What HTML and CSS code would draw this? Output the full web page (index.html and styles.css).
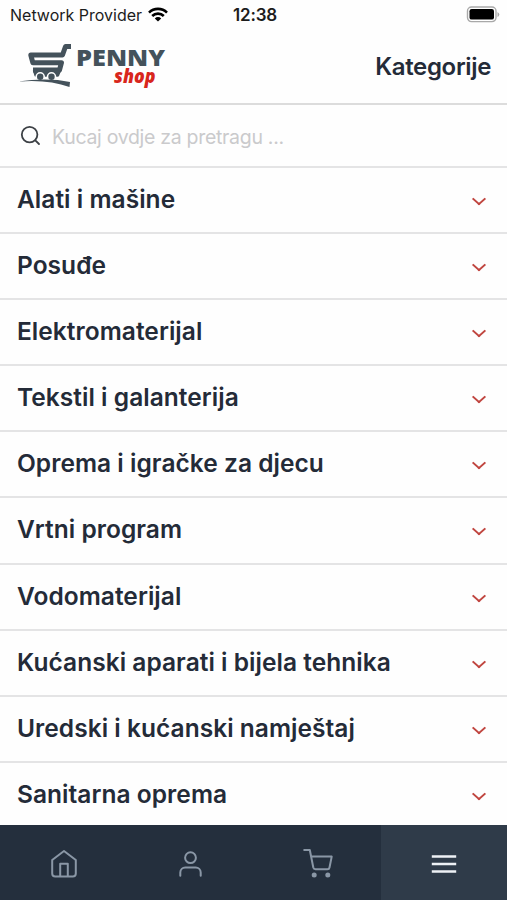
FILE: index.html
```html
<!DOCTYPE html>
<html lang="hr">
  <head>
    <meta charset="UTF-8">
    <meta name="viewport" content="width=device-width, initial-scale=1.0">
    <title>Penny shop</title>
    <link rel="stylesheet" href="styles.css">
  </head>
  <body>
    <div class="container">
      <div class="status">
        <div class="provider">
          <span>Network Provider</span>
          <svg class="wifi" width="20" height="15" viewBox="0 0 20 15">
            <g fill="none" stroke="#000" stroke-width="2.6">
              <path d="M1 5.6a12.8 12.8 0 0 1 18 0"/>
              <path d="M4.2 9a8.2 8.2 0 0 1 11.6 0"/>
            </g>
            <path d="M6.8 11.4a4.5 4.5 0 0 1 6.4 0L10 14.6z"/>
          </svg>
        </div>
        <span class="time">12:38</span>
        <svg class="battery" width="34" height="17" viewBox="0 0 34 17">
          <rect x="1.5" y="1" width="28.5" height="14.6" rx="4" fill="#fff" stroke="#a9a9a9" stroke-width="1.4"/>
          <rect x="3.5" y="3" width="24.5" height="10.6" rx="2.2"/>
          <path d="M31.5 6v5q1.8-1 1.8-2.5T31.5 6z" fill="#a9a9a9"/>
        </svg>
      </div>

      <div class="header">
        <svg class="logo" width="150" height="48" viewBox="0 0 150 48">
          <g fill="none" stroke="#44525b" stroke-width="5" stroke-linejoin="round">
            <path d="M53 5.5H47.5L44.5 14H12.8L14.8 21.7H43.5L41.5 29H15"/>
            <path d="M16.5 29L18 34H39.5L41.5 29" stroke-width="3.5"/>
          </g>
          <path d="M18 29H41L39.500 34H19z" fill="#44525b"/>
          <g fill="#44525b" stroke="#fefefe" stroke-width="1.6">
            <circle cx="22.2" cy="35.8" r="4"/>
            <circle cx="33.5" cy="35.8" r="4"/>
          </g>
          <path d="M0 40.5Q30 36.5 52 41L51.5 46Q30 38 0 40.5z" fill="#44525b"/>
          <text class="penny" x="58" y="24.5" textLength="89" lengthAdjust="spacingAndGlyphs">PENNY</text>
          <text class="shop" x="96" y="41.5" textLength="41.5" lengthAdjust="spacingAndGlyphs">shop</text>
        </svg>
        <h1>Kategorije</h1>
      </div>

      <div class="search">
        <svg width="22" height="22" viewBox="0 0 22 22" fill="none" stroke="#3c4045" stroke-width="1.8" stroke-linecap="round">
          <circle cx="9.6" cy="9.6" r="7.8"/>
          <path d="M15.3 15.3L19 19"/>
        </svg>
        <span>Kucaj ovdje za pretragu ...</span>
      </div>

      <ul class="list">
        <li>Alati i mašine <i class="arrow"></i></li>
        <li>Posuđe <i class="arrow"></i></li>
        <li>Elektromaterijal <i class="arrow"></i></li>
        <li>Tekstil i galanterija <i class="arrow"></i></li>
        <li>Oprema i igračke za djecu <i class="arrow"></i></li>
        <li>Vrtni program <i class="arrow"></i></li>
        <li>Vodomaterijal <i class="arrow"></i></li>
        <li>Kućanski aparati i bijela tehnika <i class="arrow"></i></li>
        <li>Uredski i kućanski namještaj <i class="arrow"></i></li>
        <li>Sanitarna oprema <i class="arrow"></i></li>
      </ul>

      <div class="tabs">
        <a class="tab">
          <svg width="30" height="32" viewBox="0 0 30 32">
            <path d="M3.2 12L15 3L26.8 12V25.5a3 3 0 0 1-3 3H6.2a3 3 0 0 1-3-3z"/>
            <path d="M11.2 28V15.8H18.8V28"/>
          </svg>
        </a>
        <a class="tab">
          <svg width="30" height="32" viewBox="0 0 30 32">
            <circle cx="14.5" cy="9.7" r="5.4"/>
            <path d="M4.3 27.8V24.5a5 5 0 0 1 5-5H19.7a5 5 0 0 1 5 5V27.8"/>
          </svg>
        </a>
        <a class="tab">
          <svg width="30" height="32" viewBox="0 0 30 32">
            <path d="M1.2 2H6.8L10.3 19.5Q10.7 21.2 12.5 21.2H24.5Q26.2 21.2 26.5 19.5L28.7 8.6H8.1"/>
            <circle class="wheel" cx="11.2" cy="27" r="2.5"/>
            <circle class="wheel" cx="24.8" cy="27" r="2.5"/>
          </svg>
        </a>
        <a class="tab on">
          <svg width="30" height="32" viewBox="0 0 30 32">
            <path d="M2.8 8.5H27.2M2.8 16H27.2M2.8 23.5H27.2"/>
          </svg>
        </a>
      </div>
    </div>
  </body>
</html>
```
FILE: styles.css
```css
* {
  margin: 0;
  padding: 0;
  box-sizing: border-box;
}

body {
  font-family: Inter, "Liberation Sans", sans-serif;
  background-color: #fefefe;
  color: #242b38;
}
.container {
  display: flex;
  flex-direction: column;
  height: 900px;
  overflow: hidden;
}
.status {
  display: grid;
  grid-template-columns: 1fr auto 1fr;
  align-items: center;
  height: 30px;
  padding: 0 7px 1px 10px;
  font-size: 16px;
  color: #1c1c1c;
}
.provider {
  display: flex;
  align-items: center;
  gap: 6px;
  white-space: nowrap;
}
.time {
  font-weight: 600;
  font-size: 17px;
  letter-spacing: -0.2px;
}
.battery {
  justify-self: end;
}
.header {
  display: flex;
  justify-content: space-between;
  height: 75px;
  padding: 11px 16px 0 18px;
  border-bottom: 2px solid #dcdcdc;
}
.header h1 {
  font-size: 24px;
  font-weight: 600;
  line-height: 52px;
  letter-spacing: -0.35px;
}
.penny {
  font-family: "Open Sans", sans-serif;
  font-size: 22px;
  font-weight: 800;
  fill: #44525b;
}
.shop {
  font-family: "Open Sans", sans-serif;
  font-size: 20px;
  font-weight: 800;
  font-style: italic;
  fill: #d8261c;
}
.search {
  display: flex;
  align-items: center;
  gap: 10px;
  height: 63px;
  padding: 0 20px;
  border-bottom: 2px solid #e4e4e5;
  font-size: 19.5px;
  letter-spacing: -0.3px;
  color: #cacacc;
}
.search span {
  padding-top: 2px;
}
.list {
  flex: 1;
  overflow: hidden;
  list-style: none;
}
.list li {
  display: flex;
  justify-content: space-between;
  height: 66.1px;
  padding: 0 23px 0 17px;
  border-bottom: 2px solid #e4e4e5;
  font-size: 24.5px;
  font-weight: 600;
  line-height: 62px;
  letter-spacing: 0.04px;
}
.arrow {
  width: 10px;
  height: 10px;
  margin-top: 26px;
  border-right: 2px solid #c0453f;
  border-bottom: 2px solid #c0453f;
  transform: scaleY(0.9) rotate(45deg);
}
.tabs {
  display: flex;
  height: 75px;
  background-color: #242f3d;
}
.tab {
  display: flex;
  flex: 1;
  align-items: center;
  justify-content: center;
  padding: 2px 0 0 1px;
}
.tab svg {
  fill: none;
  stroke: #8a97a6;
  stroke-width: 2;
  stroke-linecap: round;
  stroke-linejoin: round;
}
.tab .wheel {
  fill: #8a97a6;
  stroke: none;
}
.tab.on {
  padding-left: 0;
  background-color: #2f3b49;
}
.tab.on svg {
  stroke: #eef1f5;
  stroke-width: 2.4;
  stroke-linecap: butt;
}
```
